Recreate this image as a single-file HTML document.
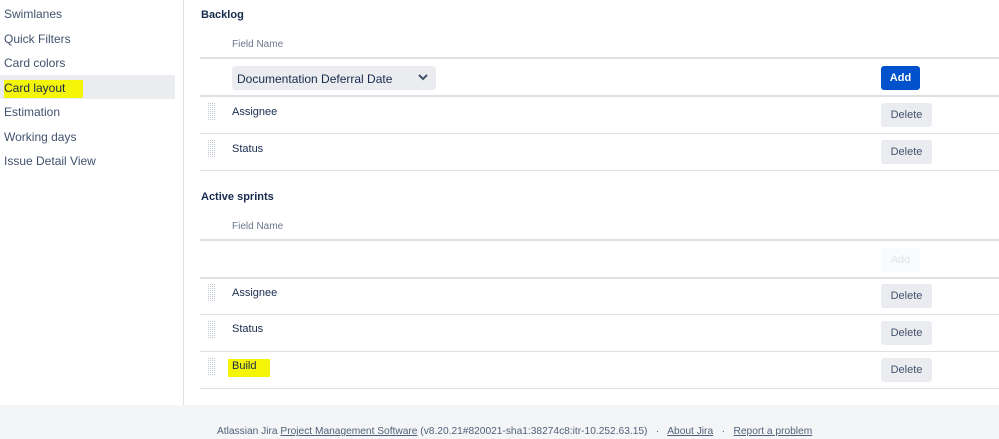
<!DOCTYPE html>
<html><head><style>
body{margin:0;width:999px;height:439px;overflow:hidden;background:#fff;font-family:"Liberation Sans",sans-serif;color:#172b4d;position:relative}
.a{position:absolute}
.side{font-size:12px;color:#42526e;left:4px}
.hl{background:#f5f50a}
.line{position:absolute;left:200px;width:799px;height:1px;background:#dfe1e6}
.thick{height:2px;background:#dfe1e6}
.t{font-size:11px;color:#172b4d}
.btn{position:absolute;left:881px;width:51px;height:24px;background:#ebecf0;border-radius:3px;font-size:11px;color:#42526e;text-align:center;line-height:24px}
.h{position:absolute;left:208px}
</style></head><body>
<svg width="0" height="0" style="position:absolute"><defs><pattern id="d" width="2" height="2" patternUnits="userSpaceOnUse"><rect width="1" height="1" fill="#c1c7d0"/></pattern></defs></svg>
<div class="a" style="left:183px;top:0;width:1px;height:405px;background:#dfe1e6"></div>
<div class="a" style="left:0;top:75px;width:175px;height:24px;background:#ebecf0;border-radius:2px"></div>
<div class="a side" style="top:7px">Swimlanes</div>
<div class="a side" style="top:32px">Quick Filters</div>
<div class="a side" style="top:56px">Card colors</div>
<div class="a side" style="top:81px;color:#172b4d"><span class="hl" style="padding:1px 18px 3px 0">Card layout</span></div>
<div class="a side" style="top:105px">Estimation</div>
<div class="a side" style="top:130px">Working days</div>
<div class="a side" style="top:154px">Issue Detail View</div>

<div class="a t" style="left:201px;top:9px;font-weight:bold">Backlog</div>
<div class="a t" style="left:232px;top:39px;font-size:10px;color:#6b778c">Field Name</div>
<div class="line thick" style="top:57px"></div>
<div class="a" style="left:232px;top:66px;width:204px;height:24px;background:#ebecf0;border-radius:3px"></div>
<div class="a" style="left:237px;top:72px;font-size:12px;color:#172b4d">Documentation Deferral Date</div>
<svg class="a" style="left:417px;top:72px" width="12" height="10"><path d="M2 3l4 4 4-4" stroke="#42526e" stroke-width="2" fill="none"/></svg>
<div class="btn" style="top:66px;width:39px;background:#0052cc;color:#fff;font-weight:bold">Add</div>
<div class="line thick" style="top:95px"></div>
<svg class="h" style="top:103px" width="7" height="18"><rect width="7" height="18" fill="url(#d)"/></svg><div class="a t" style="left:232px;top:106px">Assignee</div>
<div class="btn" style="top:103px">Delete</div>
<div class="line" style="top:133px"></div>
<svg class="h" style="top:140px" width="7" height="18"><rect width="7" height="18" fill="url(#d)"/></svg><div class="a t" style="left:232px;top:143px">Status</div>
<div class="btn" style="top:140px">Delete</div>
<div class="line" style="top:170px"></div>

<div class="a t" style="left:201px;top:191px;font-weight:bold">Active sprints</div>
<div class="a t" style="left:232px;top:221px;font-size:10px;color:#6b778c">Field Name</div>
<div class="line thick" style="top:239px"></div>
<div class="btn" style="top:248px;width:39px;background:#fafbfc;color:#e0e2e6">Add</div>
<div class="line thick" style="top:277px"></div>
<svg class="h" style="top:284px" width="7" height="18"><rect width="7" height="18" fill="url(#d)"/></svg><div class="a t" style="left:232px;top:287px">Assignee</div>
<div class="btn" style="top:284px">Delete</div>
<div class="line" style="top:314px"></div>
<svg class="h" style="top:321px" width="7" height="18"><rect width="7" height="18" fill="url(#d)"/></svg><div class="a t" style="left:232px;top:323px">Status</div>
<div class="btn" style="top:321px">Delete</div>
<div class="line" style="top:351px"></div>
<svg class="h" style="top:358px" width="7" height="18"><rect width="7" height="18" fill="url(#d)"/></svg><div class="a t" style="left:228px;top:360px"><span class="hl" style="padding:1px 14px 5px 4px">Build</span></div>
<div class="btn" style="top:358px">Delete</div>
<div class="line" style="top:388px"></div>

<div class="a" style="left:0;top:405px;width:999px;height:34px;background:#f4f5f7"></div>
<div class="a" style="left:217px;top:426px;font-size:10.2px;color:#505f79;white-space:nowrap">Atlassian Jira <u>Project Management Software</u> (v8.20.21#820021-sha1:38274c8:itr-10.252.63.15) &nbsp; · &nbsp; <u>About Jira</u> &nbsp; · &nbsp; <u>Report a problem</u></div>
</body></html>
